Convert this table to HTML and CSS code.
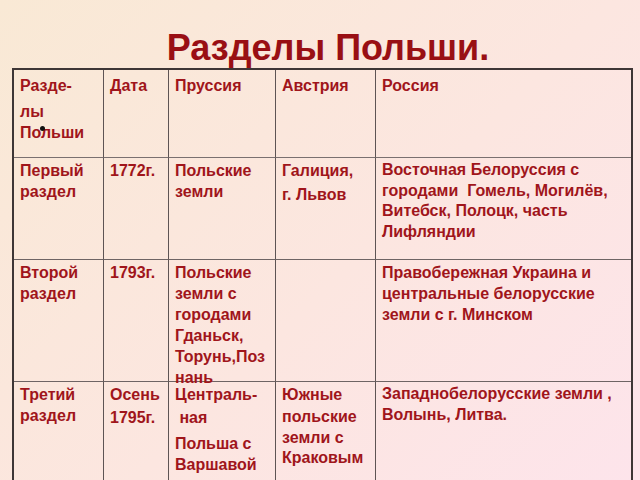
FILE: index.html
```html
<!DOCTYPE html>
<html lang="ru">
<head>
<meta charset="utf-8">
<title>Разделы Польши.</title>
<link rel="stylesheet" href="styles.css">
</head>
<body>
<div class="slide">
  <h1 class="title">Разделы Польши.</h1>
  <div class="grid">
    <div class="cell head first-col">
      <p>Разде-</p>
      <p class="gap5">лы<br>Польши</p>
      <span class="dot"></span>
    </div>
    <div class="cell head"><p>Дата</p></div>
    <div class="cell head"><p>Пруссия</p></div>
    <div class="cell head"><p>Австрия</p></div>
    <div class="cell head last-col"><p>Россия</p></div>

    <div class="cell"><p>Первый<br>раздел</p></div>
    <div class="cell"><p>1772г.</p></div>
    <div class="cell"><p>Польские<br>земли</p></div>
    <div class="cell"><p>Галиция,</p><p class="gap3">г. Львов</p></div>
    <div class="cell last-col"><p class="tight">Восточная Белоруссия с<br>городами&nbsp; Гомель, Могилёв,<br>Витебск, Полоцк, часть<br>Лифляндии</p></div>

    <div class="cell"><p>Второй<br>раздел</p></div>
    <div class="cell"><p>1793г.</p></div>
    <div class="cell"><p>Польские<br>земли с<br>городами<br>Гданьск,<br>Торунь,Поз<br>нань</p></div>
    <div class="cell"></div>
    <div class="cell last-col"><p>Правобережная Украина и<br>центральные белорусские<br>земли с г. Минском</p></div>

    <div class="cell last-row"><p>Третий<br>раздел</p></div>
    <div class="cell last-row"><p>Осень</p><p class="gap2">1795г.</p></div>
    <div class="cell last-row"><p>Централь-</p><p class="gap2">&nbsp;ная</p><p class="gap6 tight">Польша с<br>Варшавой</p></div>
    <div class="cell last-row"><p>Южные</p><p class="gap2 tight">польские<br>земли с<br>Краковым</p></div>
    <div class="cell last-row last-col"><p class="tight">Западнобелорусские земли ,<br>Волынь, Литва.</p></div>
  </div>
</div>
</body>
</html>
```
FILE: styles.css
```css
html, body {
  margin: 0;
  padding: 0;
}
body {
  width: 640px;
  height: 480px;
  overflow: hidden;
  background: linear-gradient(135deg, #f9e9d5 0%, #fce6e0 55%, #fde4eb 100%);
  font-family: "Liberation Sans", Arial, sans-serif;
}
.slide {
  padding-top: 28px;
  padding-left: 12px;
}
.title {
  margin: 0;
  height: 40px;
  line-height: 40px;
  font-size: 36px;
  font-weight: bold;
  color: #990f14;
  text-align: center;
  width: 621px;
  padding-left: 11px;
  box-sizing: border-box;
}
.grid {
  display: grid;
  width: 621px;
  box-sizing: border-box;
  grid-template-columns: 90px 65px 107px 100px 255px;
  grid-template-rows: 88px 102px 122px 98px;
  border: 2px solid #3e3636;
  border-bottom: none;
}
.cell {
  position: relative;
  box-sizing: border-box;
  border-right: 1px solid #5e5454;
  border-bottom: 1px solid #6e6464;
  padding: 2px 4px 0 6px;
  font-size: 16px;
  font-weight: bold;
  line-height: 21px;
  color: #a0151b;
  white-space: nowrap;
}
.cell.head {
  padding-top: 5px;
  border-bottom-color: #7a7070;
}
.cell.last-col {
  border-right: none;
}
.cell.last-row {
  border-bottom: none;
}
.cell p {
  margin: 0;
}
.cell p.tight {
  line-height: 20.6px;
}
.gap2 { margin-top: 2px !important; }
.gap3 { margin-top: 3px !important; }
.gap5 { margin-top: 5px !important; }
.gap6 { margin-top: 6px !important; }
.dot {
  position: absolute;
  left: 26px;
  top: 56px;
  width: 5px;
  height: 5px;
  border-radius: 50%;
  background: #111;
}
```
